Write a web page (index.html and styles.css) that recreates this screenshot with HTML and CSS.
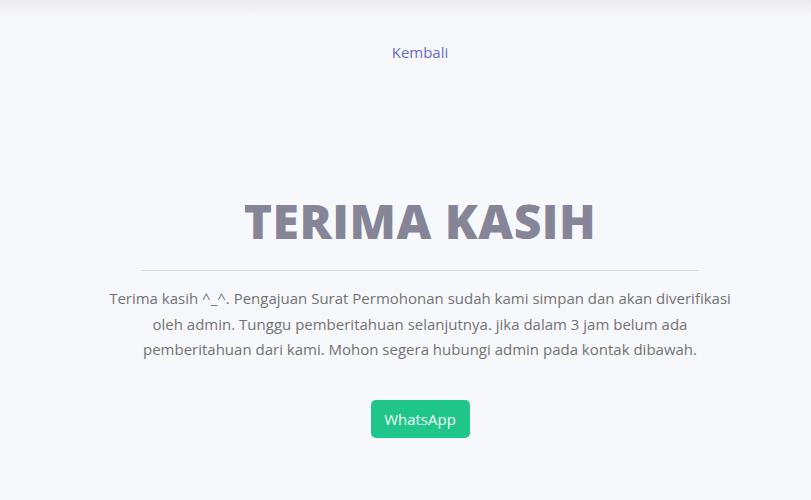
FILE: index.html
```html
<!DOCTYPE html>
<html lang="id">
<head>
<meta charset="utf-8">
<title>Terima Kasih</title>
<link rel="stylesheet" href="styles.css">
</head>
<body>
<div class="topbar"></div>
<main class="page">
  <nav class="back"><a href="#" class="back-link">Kembali</a></nav>
  <section class="thanks">
    <h1 class="title">TERIMA KASIH</h1>
    <hr class="divider">
    <p class="message">Terima kasih ^_^. Pengajuan Surat Permohonan sudah kami simpan dan akan diverifikasi oleh admin. Tunggu pemberitahuan selanjutnya. jika dalam 3 jam belum ada pemberitahuan dari kami. Mohon segera hubungi admin pada kontak dibawah.</p>
    <a href="#" class="btn-wa">WhatsApp</a>
  </section>
</main>
</body>
</html>
```
FILE: styles.css
```css
html, body {
  margin: 0;
  padding: 0;
  background: #f7f8fc;
  font-family: "Open Sans", "Noto Sans", sans-serif;
  height: 100%;
}
.topbar {
  height: 16px;
  background: linear-gradient(#ebebef, #f7f8fc);
}
.page {
  padding-left: 29px;
  display: flex;
  flex-direction: column;
  align-items: center;
}
.back {
  margin-top: 25px;
}
.back-link {
  color: #6470c8;
  text-decoration: none;
  font-size: 15px;
  line-height: 22px;
}
.thanks {
  margin-top: 128px;
  display: flex;
  flex-direction: column;
  align-items: center;
}
.title {
  margin: 0;
  font-size: 48px;
  font-weight: 800;
  color: #858597;
  line-height: 60px;
  letter-spacing: 0.5px;
}
.divider {
  width: 558px;
  margin: 19px 0 0;
  border: 0;
  border-top: 1px solid #dcdde2;
}
.message {
  margin: 15px 0 0;
  width: 640px;
  text-align: center;
  color: #737373;
  font-size: 15px;
  line-height: 25.5px;
}
.btn-wa {
  margin-top: 37px;
  display: inline-flex;
  align-items: center;
  justify-content: center;
  width: 99px;
  height: 38px;
  background: #20c58a;
  color: #f2fff8;
  border-radius: 5px;
  text-decoration: none;
  font-size: 15px;
}
```
